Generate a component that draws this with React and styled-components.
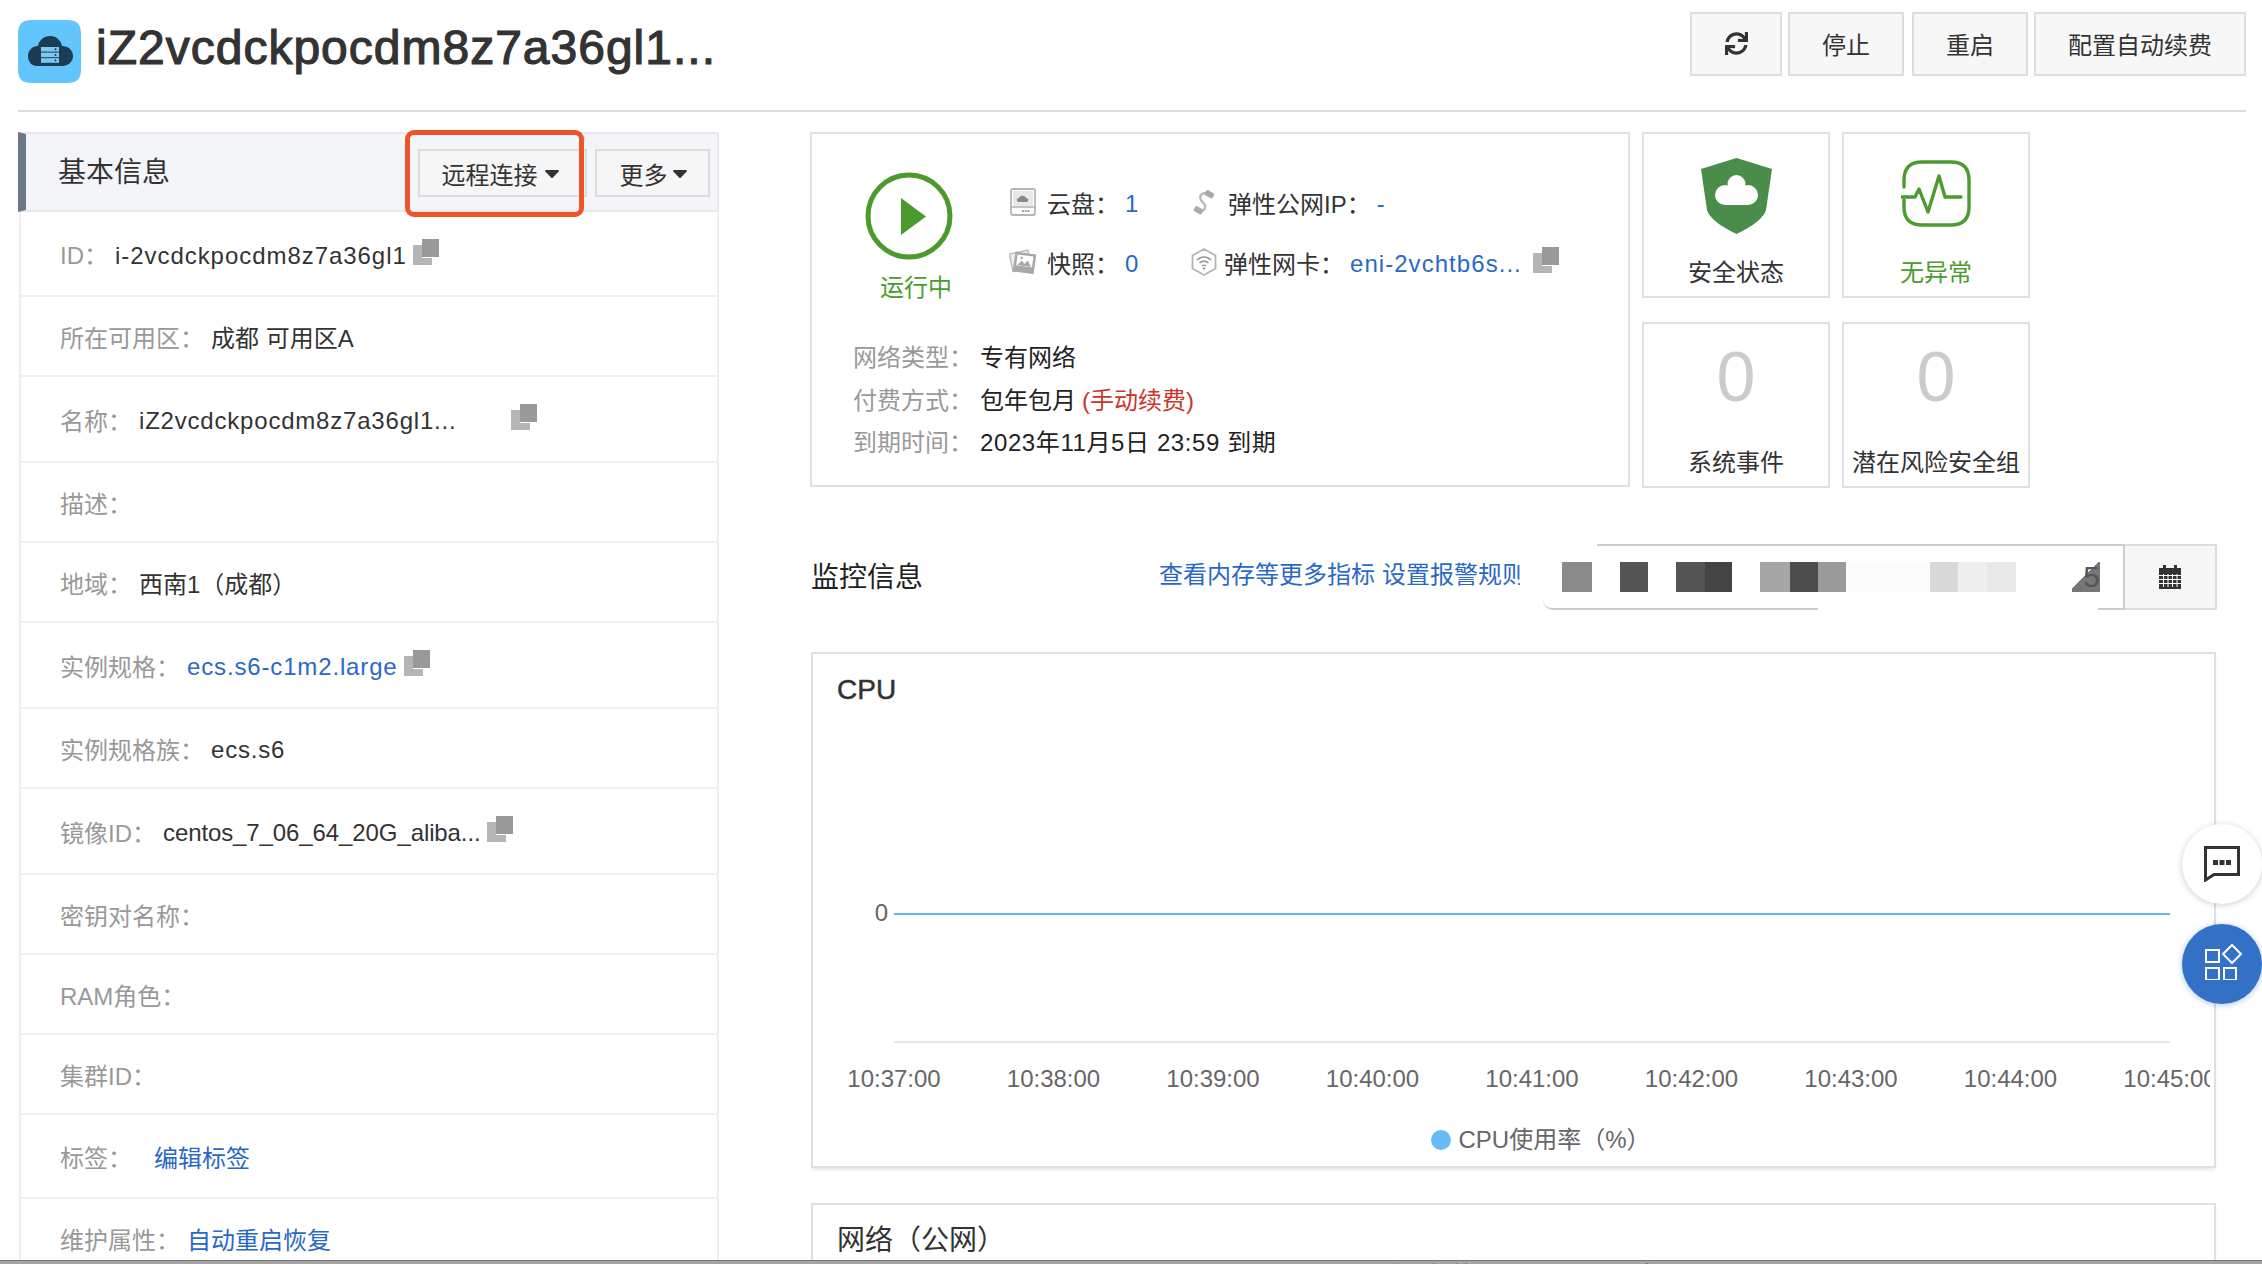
import React from 'react';
import styled, { createGlobalStyle } from 'styled-components';
import { FaSync, FaCaretDown } from 'react-icons/fa';

const GlobalStyle = createGlobalStyle`
  html, body {
    margin: 0;
    background: #fff;
  }
  * {
    box-sizing: border-box;
  }
`;

const Page = styled.div`
  position: relative;
  width: 2262px;
  height: 1264px;
  overflow: hidden;
  padding: 0 16px 0 18px;
  font-family: "Liberation Sans", "Noto Sans CJK SC", sans-serif;
  font-size: 24px;
  color: #333;
`;

const Header = styled.header`
  display: flex;
  align-items: flex-start;
  height: 112px;
  padding-top: 12px;
  border-bottom: 2px solid #ddd;
`;

const Logo = styled.svg`
  width: 63px;
  height: 63px;
  margin-top: 8px;
  flex: none;
`;

const Title = styled.h1`
  margin: 6px 0 0 15px;
  font-size: 48px;
  line-height: 60px;
  font-weight: 500;
  letter-spacing: 1px;
  -webkit-text-stroke: 1.2px #333;
  color: #333;
`;

const Toolbar = styled.div`
  display: flex;
  margin-left: auto;
`;

const ToolButton = styled.button`
  width: ${(p) => p.$w}px;
  height: 64px;
  margin-left: ${(p) => p.$ml || 0}px;
  display: flex;
  align-items: center;
  justify-content: center;
  background: #f7f7f7;
  border: 2px solid #ddd;
  font: inherit;
  color: #333;
  padding: 0 0 2px;
`;

const Main = styled.div`
  display: grid;
  grid-template-columns: 701px 1fr;
  column-gap: 91px;
  margin-top: 20px;
`;

const Panel = styled.section`
  border-left: 2px solid #eee;
  border-right: 2px solid #eee;
  margin-left: 1px;
`;

const PanelHead = styled.div`
  position: relative;
  display: flex;
  align-items: center;
  height: 80px;
  margin-left: -3px;
  margin-right: -2px;
  padding-left: 32px;
  background: #f4f5f9;
  border: 2px solid #e6e8ee;
  border-left: 8px solid #6d7885;
`;

const PanelTitle = styled.h2`
  margin: 2px 0 0;
  flex: none;
  font-size: 28px;
  font-weight: 400;
  line-height: 36px;
  white-space: nowrap;
  color: #333;
`;

const HeadButton = styled.button`
  height: 48px;
  width: ${(p) => p.$w}px;
  margin-top: 2px;
  margin-left: ${(p) => p.$ml}px;
  flex: none;
  display: flex;
  align-items: center;
  justify-content: center;
  background: #f6f6f6;
  border: 2px solid #ddd;
  font: inherit;
  color: #333;
  padding: 0 0 0 ${(p) => p.$pad || 0}px;
  & svg {
    margin-left: ${(p) => p.$caretGap}px;
  }
`;

const Highlight = styled.div`
  position: absolute;
  left: 379px;
  top: -4px;
  width: 179px;
  height: 87px;
  border: 5px solid #ef5329;
  border-radius: 9px;
`;

const Row = styled.div`
  display: flex;
  align-items: center;
  height: ${(p) => p.$h}px;
  padding-left: 39px;
  border-bottom: 2px solid #f0f0f0;
  white-space: nowrap;
`;

const Label = styled.span`
  color: #999;
  margin-right: ${(p) => p.$gap || 7}px;
`;

const Value = styled.span`
  display: inline-block;
  width: ${(p) => (p.$w ? `${p.$w}px` : 'auto')};
  margin-top: ${(p) => (p.$ls !== undefined ? 4 : 0)}px;
  color: ${(p) => (p.$link ? '#2a68c8' : '#333')};
  letter-spacing: ${(p) => p.$ls || 0}px;
`;

const Copy = styled.svg`
  width: 26px;
  height: 26px;
  margin-left: ${(p) => p.$ml ?? 6}px;
  margin-bottom: 4px;
  flex: none;
`;

const RightCol = styled.div`
  min-width: 0;
`;

const Overview = styled.div`
  display: flex;
`;

const StatusCard = styled.div`
  width: 820px;
  height: 355px;
  border: 2px solid #e0e0e0;
`;

const StatusTop = styled.div`
  display: flex;
  height: 203px;
  padding: 38px 0 0 53px;
`;

const RunState = styled.div`
  width: 144px;
  display: flex;
  flex-direction: column;
  flex: none;
`;

const RunIcon = styled.svg`
  width: 88px;
  height: 88px;
`;

const RunText = styled.span`
  margin: 12px 0 0 15px;
  line-height: 32px;
  color: #4a9c2f;
`;

const Resources = styled.div`
  display: grid;
  grid-template-columns: 181px 1fr;
  grid-auto-rows: 60px;
`;

const Resource = styled.div`
  display: flex;
  align-items: center;
  height: 60px;
  white-space: nowrap;
`;

const ResourceIcon = styled.svg`
  width: 28px;
  height: 28px;
  margin-right: ${(p) => p.$gap}px;
  flex: none;
`;

const Count = styled.span`
  margin: 3px 0 0 6px;
  color: #2a68c8;
  letter-spacing: ${(p) => p.$ls || 0}px;
`;

const InfoList = styled.div`
  padding-left: 41px;
`;

const InfoRow = styled.div`
  display: flex;
  line-height: 42.5px;
  white-space: nowrap;
`;

const InfoValue = styled.span`
  color: #222;
  letter-spacing: ${(p) => p.$ls || 0}px;
`;

const Overdue = styled.span`
  margin-left: 6px;
  color: #c9352b;
`;

const Tiles = styled.div`
  display: grid;
  grid-template-columns: 188px 188px;
  grid-template-rows: 166px 166px;
  column-gap: 12px;
  row-gap: 24px;
  margin-left: 12px;
`;

const Tile = styled.div`
  display: flex;
  flex-direction: column;
  align-items: center;
  border: 2px solid #e0e0e0;
`;

const TileVisual = styled.div`
  height: 123px;
  padding-top: ${(p) => p.$top || 0}px;
  display: flex;
  align-items: ${(p) => (p.$top ? 'flex-start' : 'center')};
  justify-content: center;
`;

const TileNumber = styled.span`
  margin-bottom: 17px;
  font-size: 70px;
  line-height: 80px;
  color: #ccc;
`;

const TileLabel = styled.span`
  line-height: 32px;
  color: ${(p) => (p.$ok ? '#4a9c2f' : '#333')};
`;

const MonitorBar = styled.div`
  display: flex;
  align-items: center;
  width: 1406px;
  height: 66px;
  margin-top: 56px;
  margin-left: 1px;
`;

const MonitorTitle = styled.h2`
  margin: 0 0 5px;
  font-size: 28px;
  font-weight: 400;
  color: #222;
  width: 348px;
`;

const MonitorLink = styled.span`
  color: #2a68c8;
  margin-right: 7px;
  white-space: nowrap;
`;

const MonitorLinks = styled.div`
  display: flex;
  width: 384px;
  margin-bottom: 9px;
`;

const RangeBox = styled.div`
  position: relative;
  display: flex;
  align-items: center;
  width: 582px;
  height: 66px;
  padding-left: 19px;
  background: #fff;
  border: 2px solid #ccc;
  border-left: 0;
  border-bottom-left-radius: 10px;
`;

const Mosaic = styled.span`
  position: relative;
  z-index: 1;
  width: ${(p) => p.$w}px;
  height: 30px;
  flex: none;
  background: ${(p) => p.$c};
`;

const MosaicEnd = styled.span`
  width: 28px;
  height: 30px;
  flex: none;
  line-height: 30px;
  font-size: 30px;
  text-align: right;
  color: #555;
  background: linear-gradient(135deg, transparent 45%, #777 45%);
`;

const Patch = styled.div`
  position: absolute;
  background: #fff;
  left: ${(p) => p.$l}px;
  top: ${(p) => p.$t}px;
  width: ${(p) => p.$w}px;
  height: ${(p) => p.$h}px;
`;

const CalendarButton = styled.button`
  width: 92px;
  height: 66px;
  display: flex;
  align-items: center;
  justify-content: center;
  padding: 0;
  background: #f7f7f7;
  border: 2px solid #ddd;
  border-left: 0;
`;

const ChartCard = styled.section`
  width: 1405px;
  height: ${(p) => p.$h}px;
  margin-top: ${(p) => p.$top}px;
  margin-left: 1px;
  border: 2px solid #dce0e8;
  box-shadow: 0 3px 3px -1px #e6e8ee;
`;

const ChartTitle = styled.h3`
  margin: 0;
  height: 66px;
  padding-left: 24px;
  font-size: 28px;
  font-weight: 400;
  line-height: 72px;
  color: #333;
  -webkit-text-stroke: ${(p) => (p.$cjk ? '0' : '0.5px #333')};
`;

const ChartSvg = styled.svg`
  display: block;
  width: 1397px;
  height: 380px;
  font-family: "Liberation Sans", "Noto Sans CJK SC", sans-serif;
  font-size: 24px;
`;

const Legend = styled.div`
  display: flex;
  align-items: center;
  justify-content: center;
  padding-left: 55px;
  margin-top: 28px;
  line-height: 24px;
  color: #666;
`;

const LegendDot = styled.i`
  width: 20px;
  height: 20px;
  margin-right: 7px;
  border-radius: 50%;
  background: #66bbf8;
`;

const FloatButton = styled.div`
  position: absolute;
  left: 2182px;
  top: ${(p) => p.$top}px;
  width: 80px;
  height: 80px;
  display: flex;
  align-items: center;
  justify-content: center;
  border-radius: 50%;
  background: ${(p) => (p.$primary ? '#3371c7' : '#fff')};
  box-shadow: 0 1px 6px ${(p) => (p.$primary ? 'rgba(51, 113, 199, 0.4)' : 'rgba(0, 0, 0, 0.2)')};
`;

const AppsIcon = styled.svg`
  width: 38px;
  height: 36px;
  margin: 0 0 4px 4px;
`;

const BottomStrip = styled.div`
  position: absolute;
  left: 0;
  right: 0;
  bottom: 0;
  height: 4px;
  overflow: hidden;
  background: #a4a4a4;
  border-top: 1px solid #777;
`;

const StripText = styled.span`
  position: absolute;
  left: ${(p) => p.$l}px;
  top: 0;
  font-size: 24px;
  line-height: 30px;
  white-space: nowrap;
  color: ${(p) => p.$c};
`;

const rows = [
  { h: 85, label: 'ID：', value: 'i-2vcdckpocdm8z7a36gl1', ls: 0.95, copy: true },
  { h: 80, label: '所在可用区：', value: '成都 可用区A' },
  { h: 86, label: '名称：', value: 'iZ2vcdckpocdm8z7a36gl1...', ls: 0.8, w: 372, copy: true, copyGap: 0 },
  { h: 80, label: '描述：' },
  { h: 80, label: '地域：', value: '西南1（成都）' },
  { h: 86, label: '实例规格：', value: 'ecs.s6-c1m2.large', ls: 0.85, link: true, copy: true },
  { h: 80, label: '实例规格族：', value: 'ecs.s6', ls: 0.8 },
  { h: 86, label: '镜像ID：', value: 'centos_7_06_64_20G_aliba...', ls: -0.1, copy: true },
  { h: 80, label: '密钥对名称：' },
  { h: 80, label: 'RAM角色：' },
  { h: 80, label: '集群ID：' },
  { h: 84, label: '标签：', value: '编辑标签', link: true, gap: 22 },
  { h: 81, label: '维护属性：', value: '自动重启恢复', link: true, gap: 7 },
];

const mosaicBlocks = [
  [30, '#8a8a8a'], [28, 'transparent'], [28, '#555'], [28, 'transparent'], [29, '#555'], [27, '#444'],
  [28, 'transparent'], [30, '#a5a5a5'], [28, '#4d4d4d'], [28, '#9a9a9a'], [84, '#fcfcfc'],
  [28, '#d8d8d8'], [29, '#eee'], [29, '#e8e8e8'], [56, 'transparent'],
];

const times = ['10:37:00', '10:38:00', '10:39:00', '10:40:00', '10:41:00', '10:42:00', '10:43:00', '10:44:00', '10:45:00'];

function CopyIcon({ ml }) {
  return (
    <Copy $ml={ml} viewBox="0 0 26 26">
      <path d="M0 6h9v13h10v7H0z" fill="#b5b5b5" />
      <rect x="9" y="0" width="17" height="18" fill="#999" />
    </Copy>
  );
}

function AppLogo() {
  return (
    <Logo viewBox="0 0 63 63">
      <path d="M14 0h35c10 0 14 4 14 14v35c0 10-4 14-14 14H14C4 63 0 59 0 49V14C0 4 4 0 14 0z" fill="#62c5fc" />
      <path d="M19 46C13 46 10 41 10 36c0-5 4-10 10-10 1-6 6-10 12-10 7 0 11 5 12 10 6 0 11 4 11 10 0 6-5 10-11 10z" fill="#1a3d54" />
      <g fill="#7dc8f5">
        <rect x="23" y="27" width="18" height="4.6" />
        <rect x="23" y="32.6" width="18" height="4.6" />
        <rect x="23" y="38.2" width="18" height="4.6" />
      </g>
      <g fill="#1a3d54">
        <circle cx="37.5" cy="29.3" r="1" />
        <circle cx="37.5" cy="34.9" r="1" />
        <circle cx="37.5" cy="40.5" r="1" />
      </g>
    </Logo>
  );
}

function DiskIcon() {
  return (
    <ResourceIcon $gap={10} viewBox="0 0 28 28">
      <rect x="2" y="1" width="24" height="26" rx="2" fill="#fff" stroke="#b5b5b5" strokeWidth="1.8" />
      <rect x="4" y="3" width="20" height="15" fill="#e8e8e8" />
      <path d="M10 14c-3 0-3-4 0-4 1-3 6-3 7 0 3 0 3 4 0 4z" fill="#888" />
      <path d="M2 19h24" stroke="#b5b5b5" strokeWidth="1.6" />
      <path d="M13 23h8" stroke="#999" strokeWidth="1.8" strokeDasharray="1.800 1" />
    </ResourceIcon>
  );
}

function SnapshotIcon() {
  return (
    <ResourceIcon $gap={10} viewBox="0 0 28 28">
      <rect x="2" y="4" width="19" height="18" fill="#eee" stroke="#bbb" strokeWidth="1.4" transform="rotate(-12 11 13)" />
      <g transform="rotate(8 16 15)">
        <rect x="5" y="5" width="21" height="20" fill="#a8a8a8" />
        <rect x="7.500" y="7.500" width="16" height="11" fill="#fff" />
        <path d="M8.500 18l4-5 3 3 3-4 4 6z" fill="#a8a8a8" />
        <circle cx="12" cy="10.500" r="1.300" fill="#a8a8a8" />
      </g>
    </ResourceIcon>
  );
}

function LinkIcon() {
  return (
    <ResourceIcon $gap={10} viewBox="0 0 28 28">
      <path d="M16 5c-5 0-7 3-5 7l4 5c1 3-1 6-4 6" fill="none" stroke="#bbb" strokeWidth="2.4" />
      <rect x="15" y="3" width="9" height="6" rx="1.500" fill="#aaa" transform="rotate(30 19 6)" />
      <rect x="4" y="19" width="9" height="6" rx="1.500" fill="#aaa" transform="rotate(30 8 22)" />
    </ResourceIcon>
  );
}

function NetCardIcon() {
  return (
    <ResourceIcon $gap={6} viewBox="0 0 28 28">
      <path d="M14 1l11.500 6.500v13L14 27 2.500 20.500v-13z" fill="none" stroke="#b5b5b5" strokeWidth="1.8" />
      <g fill="none" stroke="#999" strokeWidth="1.6">
        <path d="M7 12c4-4 10-4 14 0" />
        <path d="M9.500 15c3-2.500 6-2.500 9 0" />
        <path d="M12 18c1-1 3-1 4 0" />
      </g>
      <circle cx="14" cy="20.500" r="1.200" fill="#999" />
    </ResourceIcon>
  );
}

function ShieldIcon() {
  return (
    <svg width="71" height="76" viewBox="0 0 71 76">
      <path d="M35.500 0L71 11 65 52C62 62 46 71 35.500 76 25 71 9 62 6 52L0 11z" fill="#4a8c4a" />
      <g fill="#fff">
        <circle cx="35.500" cy="26" r="9" />
        <circle cx="24" cy="37" r="10" />
        <circle cx="47" cy="37" r="10" />
        <rect x="24" y="30" width="23" height="17" />
      </g>
    </svg>
  );
}

function PulseIcon() {
  return (
    <svg width="70" height="68" viewBox="0 0 70 68" fill="none" stroke="#4a9c2f" strokeWidth="3.4" strokeLinejoin="round" strokeLinecap="round">
      <path d="M3 27V20Q3 2 21 2H50Q68 2 68 20V47Q68 65 50 65H21Q3 65 3 47V40" />
      <path d="M0 37H14L18 29 27 52 38 16 44 37H60" />
    </svg>
  );
}

function CalendarIcon() {
  return (
    <svg width="24" height="24" viewBox="0 0 24 24">
      <rect x="1" y="3" width="22" height="21" fill="#333" />
      <rect x="5" y="0" width="3" height="5" fill="#333" />
      <rect x="16" y="0" width="3" height="5" fill="#333" />
      <path d="M1 10.500h22M1 14.500h22M1 18.500h22M5.500 9v13M10 9v13M14.500 9v13M19 9v13" stroke="#fff" strokeWidth="1" />
    </svg>
  );
}

function CpuChart() {
  return (
    <ChartSvg viewBox="0 0 1397 380">
      <line x1="81" y1="194" x2="1357" y2="194" stroke="#66b5f2" strokeWidth="2" />
      <line x1="81" y1="322" x2="1357" y2="322" stroke="#e5e5e5" strokeWidth="2" />
      <text x="75" y="201" textAnchor="end" fill="#666">0</text>
      {times.map((time, i) => (
        <text key={time} x={81 + i * 159.5} y="367" textAnchor="middle" fill="#666">{time}</text>
      ))}
    </ChartSvg>
  );
}

export default function App() {
  return (
    <Page>
      <GlobalStyle />
      <Header>
        <AppLogo />
        <Title>iZ2vcdckpocdm8z7a36gl1...</Title>
        <Toolbar>
          <ToolButton $w={92} aria-label="刷新"><FaSync size={23} color="#333" /></ToolButton>
          <ToolButton $w={116} $ml={6}>停止</ToolButton>
          <ToolButton $w={116} $ml={8}>重启</ToolButton>
          <ToolButton $w={212} $ml={6}>配置自动续费</ToolButton>
        </Toolbar>
      </Header>
      <Main>
        <Panel>
          <PanelHead>
            <PanelTitle>基本信息</PanelTitle>
            <HeadButton $w={169} $ml={248} $caretGap={2}>远程连接 <FaCaretDown size={24} /></HeadButton>
            <HeadButton $w={115} $ml={8} $caretGap={0} $pad={6}>更多<FaCaretDown size={24} /></HeadButton>
            <Highlight />
          </PanelHead>
          {rows.map((row) => (
            <Row key={row.label} $h={row.h}>
              <Label $gap={row.gap}>{row.label}</Label>
              {row.value && (
                <Value $ls={row.ls} $link={row.link} $w={row.w}>{row.value}</Value>
              )}
              {row.copy && <CopyIcon ml={row.copyGap} />}
            </Row>
          ))}
        </Panel>
        <RightCol>
          <Overview>
            <StatusCard>
              <StatusTop>
                <RunState>
                  <RunIcon viewBox="0 0 88 88">
                    <circle cx="44" cy="44" r="41" fill="none" stroke="#4a9a2e" strokeWidth="5" />
                    <path d="M36 26L61 44.500 36 63z" fill="#4a9a2e" />
                  </RunIcon>
                  <RunText>运行中</RunText>
                </RunState>
                <Resources>
                  <Resource><DiskIcon />云盘：<Count>1</Count></Resource>
                  <Resource><LinkIcon />弹性公网IP：<Count>-</Count></Resource>
                  <Resource><SnapshotIcon />快照：<Count>0</Count></Resource>
                  <Resource>
                    <NetCardIcon />弹性网卡：<Count $ls={1.05}>eni-2vchtb6s...</Count>
                    <CopyIcon ml={11} />
                  </Resource>
                </Resources>
              </StatusTop>
              <InfoList>
                <InfoRow><Label>网络类型：</Label><InfoValue>专有网络</InfoValue></InfoRow>
                <InfoRow><Label>付费方式：</Label><InfoValue>包年包月</InfoValue><Overdue>(手动续费)</Overdue></InfoRow>
                <InfoRow><Label>到期时间：</Label><InfoValue $ls={0.6}>2023年11月5日 23:59 到期</InfoValue></InfoRow>
              </InfoList>
            </StatusCard>
            <Tiles>
              <Tile>
                <TileVisual $top={24}><ShieldIcon /></TileVisual>
                <TileLabel>安全状态</TileLabel>
              </Tile>
              <Tile>
                <TileVisual $top={26}><PulseIcon /></TileVisual>
                <TileLabel $ok>无异常</TileLabel>
              </Tile>
              <Tile>
                <TileVisual><TileNumber>0</TileNumber></TileVisual>
                <TileLabel>系统事件</TileLabel>
              </Tile>
              <Tile>
                <TileVisual><TileNumber>0</TileNumber></TileVisual>
                <TileLabel>潜在风险安全组</TileLabel>
              </Tile>
            </Tiles>
          </Overview>
          <MonitorBar>
            <MonitorTitle>监控信息</MonitorTitle>
            <MonitorLinks>
              <MonitorLink>查看内存等更多指标</MonitorLink>
              <MonitorLink>设置报警规则</MonitorLink>
            </MonitorLinks>
            <RangeBox>
              {mosaicBlocks.map(([w, c], i) => (
                <Mosaic key={i} $w={w} $c={c} />
              ))}
              <MosaicEnd>5</MosaicEnd>
              <Patch $l={-23} $t={-4} $w={77} $h={52} />
              <Patch $l={275} $t={50} $w={280} $h={20} />
            </RangeBox>
            <CalendarButton aria-label="日历"><CalendarIcon /></CalendarButton>
          </MonitorBar>
          <ChartCard $h={516} $top={42}>
            <ChartTitle>CPU</ChartTitle>
            <CpuChart />
            <Legend><LegendDot />CPU使用率（%）</Legend>
          </ChartCard>
          <ChartCard $h={120} $top={35}>
            <ChartTitle $cjk>网络（公网）</ChartTitle>
          </ChartCard>
        </RightCol>
      </Main>
      <FloatButton $top={824}>
        <svg width="36" height="36" viewBox="0 0 36 36" fill="none">
          <path d="M1.500 1.500h33v27H10L1.500 34z" stroke="#333" strokeWidth="3" />
          <path d="M9 14h5v5H9zM15.500 14h5v5h-5zM22 14h5v5h-5z" fill="#333" />
        </svg>
      </FloatButton>
      <FloatButton $top={924} $primary>
        <AppsIcon viewBox="0 0 38 36" fill="none" stroke="#fff" strokeWidth="2">
          <rect x="1" y="6" width="13" height="12" />
          <rect x="1" y="24" width="13" height="12" />
          <rect x="19" y="24" width="12" height="12" />
          <path d="M27 1l9 9-9 9-9-9z" />
        </AppsIcon>
      </FloatButton>
      <BottomStrip>
        <StripText $l={1380} $c="#666">流量标签</StripText>
        <StripText $l={1640} $c="#222">每日</StripText>
        <StripText $l={1730} $c="#222">1000M</StripText>
      </BottomStrip>
    </Page>
  );
}
